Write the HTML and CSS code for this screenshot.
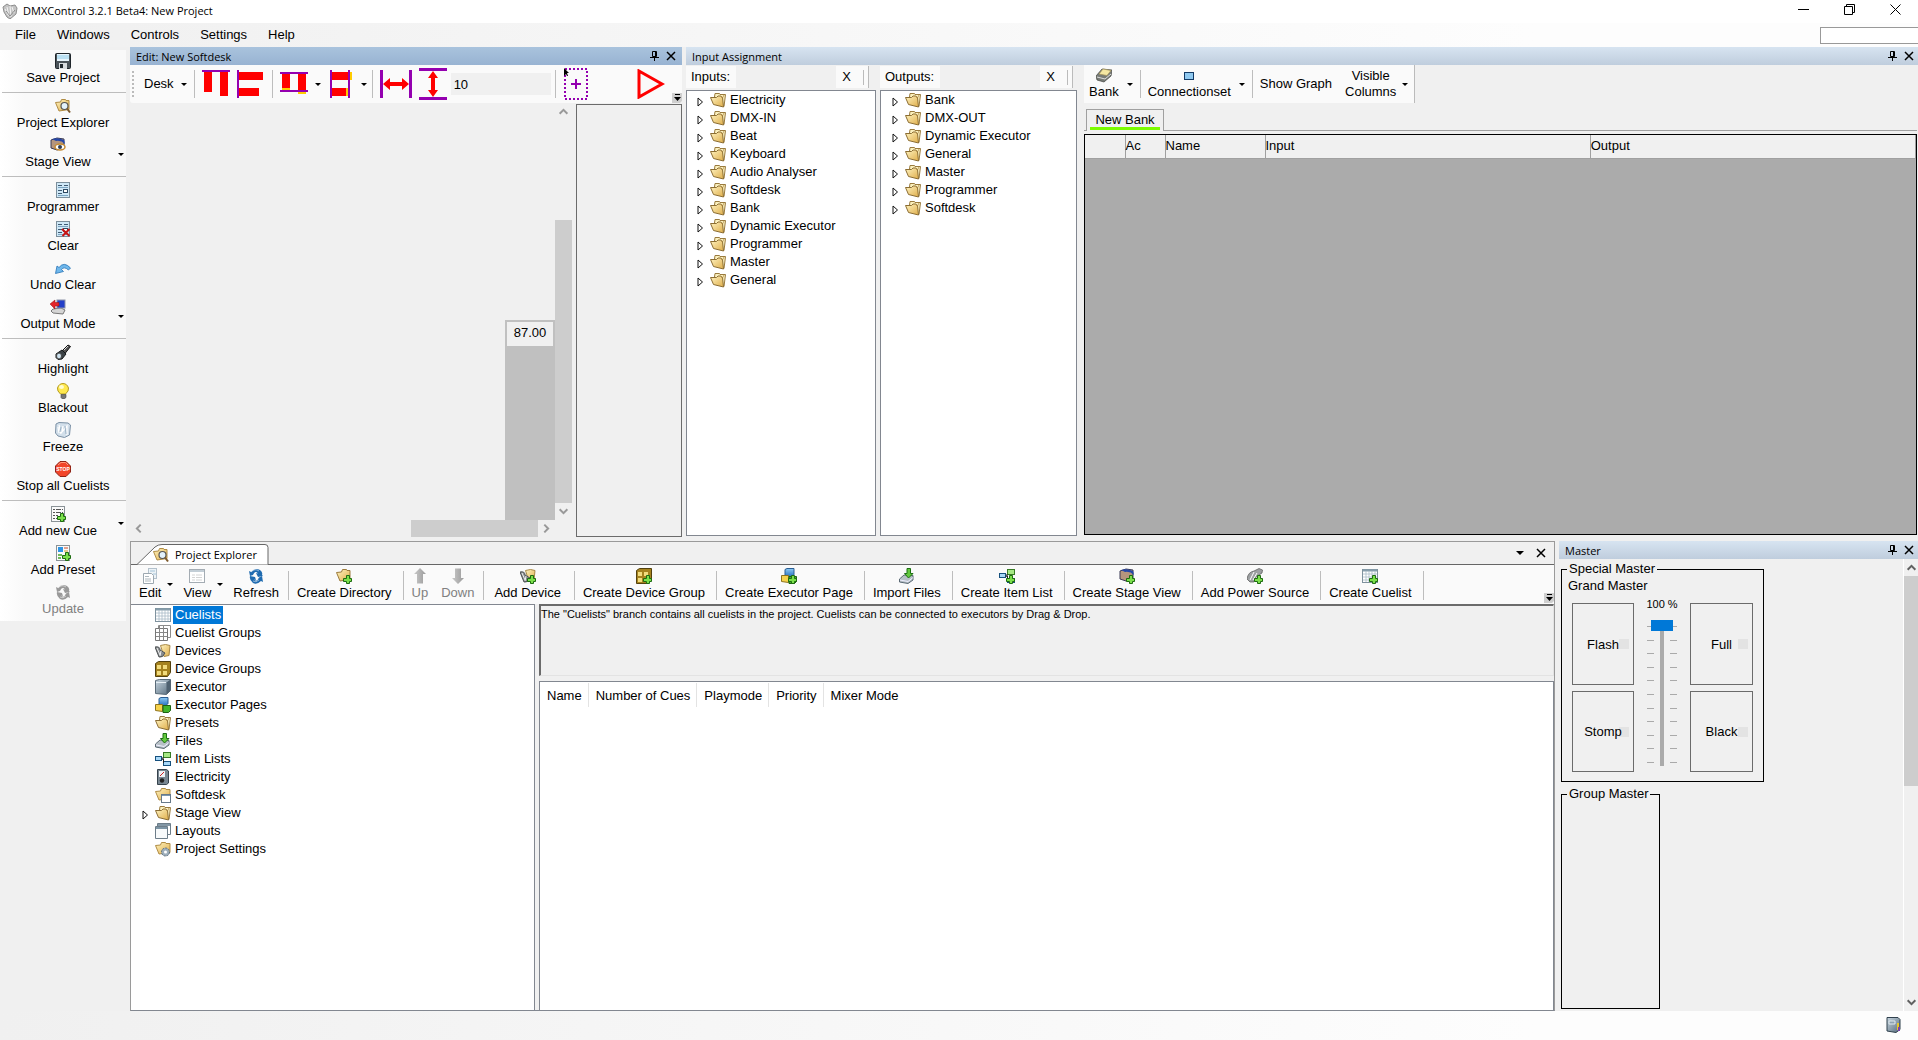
FILE: index.html
```html
<!DOCTYPE html>
<html lang="en">
<head>
<meta charset="utf-8">
<title>DMXControl 3.2.1 Beta4: New Project</title>
<link rel="stylesheet" href="styles.css">
</head>
<body>
<svg class="defs" aria-hidden="true">
  <defs>
    <linearGradient id="gold" x1="0" y1="0" x2="1" y2="1"><stop offset="0" stop-color="#fff3c0"/><stop offset="1" stop-color="#dfae4b"/></linearGradient>
    <linearGradient id="steel" x1="0" y1="0" x2="1" y2="1"><stop offset="0" stop-color="#c8d6e0"/><stop offset="1" stop-color="#556b7c"/></linearGradient>
    <linearGradient id="blue" x1="0" y1="0" x2="0" y2="1"><stop offset="0" stop-color="#8ecbf5"/><stop offset="1" stop-color="#2a72c0"/></linearGradient>
    <linearGradient id="arrow" x1="0" y1="0" x2="1" y2="0"><stop offset="0" stop-color="#c9c9c9"/><stop offset="1" stop-color="#9a9a9a"/></linearGradient>
  </defs>
  <symbol id="plus" viewBox="0 0 16 16"><path d="M10.500 7.500h3v3h2v3h-2v2h-3v-2h-3v-3h3z" fill="#7be04a" stroke="#1d6b10"/></symbol>
  <symbol id="app" viewBox="0 0 16 16"><path d="M1 4l4-3 3 2 5-1 2 3-1 6-6 5-3-2-3-5z" fill="#c4c4c4" stroke="#8d8d8d"/><path d="M5 4l2 9M8 3l1 11M3 6l3 6M10 4l2 6" stroke="#f4f4f4"/><path d="M4 8l4 5 5-6" stroke="#8a8a8a" fill="none"/></symbol>
  <symbol id="save" viewBox="0 0 16 16"><rect x=".5" y=".5" width="15" height="15" rx="1" fill="#4a5359" stroke="#1f262b"/><rect x="2" y="1" width="12" height="7" fill="#e8f5fc"/><path d="M2 3h12M2 5h12" stroke="#8ccbe8"/><rect x="4" y="10" width="8" height="6" fill="#d8dde0"/><rect x="5" y="11" width="3" height="4" fill="#20282e"/></symbol>
  <symbol id="folder" viewBox="0 0 16 16"><path d="M4.500 5l.5-3.500h4.500l.5 1h5.500l-1.500 12" fill="#fbf0bd" stroke="#9a7b3e"/><path d="M.5 5.500h6l1.500-1.500h2.500l2 1.500 1 9.500-10-2.500z" fill="url(#gold)" stroke="#8b6d33"/><path d="M10.500 4.500l2 1.500 1.500-3" stroke="#a7833f" fill="none" stroke-width=".7"/></symbol>
  <symbol id="fsearch" viewBox="0 0 16 16"><path d="M.5 4.500l5-.5 1-2.500h4l.5 1h3v9l-10 1.500z" fill="url(#gold)" stroke="#b08c44"/><circle cx="9.500" cy="8" r="3.500" fill="#e3f2fb" stroke="#555" stroke-width="1.200"/><path d="M12 10.500l3 4" stroke="#7d5a2c" stroke-width="2"/></symbol>
  <symbol id="stage" viewBox="0 0 16 16"><path d="M1 3l6-2 7 1v9l-7 2-6-2z" fill="#b4957d" stroke="#3b3b55"/><path d="M2 2q6-2 12 1l1 4q-4-4-9-3z" fill="#2447a8"/><ellipse cx="10" cy="10" rx="5" ry="3" fill="#fff" stroke="#c58c35" stroke-width="1.500"/><circle cx="10" cy="10" r="2" fill="#2c3c52"/></symbol>
  <symbol id="stageadd" viewBox="0 0 16 16"><path d="M1 3l6-2 7 1v9l-7 2-6-2z" fill="#b4957d" stroke="#3b3b55"/><path d="M2 2q6-2 12 1l1 4q-4-4-9-3z" fill="#2447a8"/><use href="#plus" width="16" height="16"/></symbol>
  <symbol id="prog" viewBox="0 0 16 16"><rect x="1.500" y=".5" width="13" height="15" fill="#cfe8f7" stroke="#7c8f9c"/><path d="M3 3.500h4M9 3.500h4M3 8.500h4M3 11.500h4" stroke="#3f5b73"/><path d="M3 5.500h10M3 13.500h10" stroke="#7ca6c4"/><rect x="8.500" y="7.500" width="4" height="3" fill="#fff" stroke="#2f4a63"/></symbol>
  <symbol id="clear" viewBox="0 0 16 16"><use href="#prog" width="16" height="16"/><path d="M7 8l7.500 7M14.500 8l-7 7" stroke="#c81414" stroke-width="2"/></symbol>
  <symbol id="undo" viewBox="0 0 16 16"><path d="M.5 13.500L2 6l2 1.500Q9 1 15.500 8l-2 2Q9 6 6.500 9.500l2 2z" fill="#6fb8ec" stroke="#2a74b5" stroke-width=".8"/></symbol>
  <symbol id="output" viewBox="0 0 16 16"><path d="M3 10l8-1 4 2-2 4-10-1-2-2z" fill="#d5d5d5" stroke="#777"/><rect x="7" y="1" width="8" height="8" fill="#243fc8" stroke="#8d94a7"/><path d="M0 5l5-4v2.500h4v3.500H5v3z" fill="#e3242b" stroke="#901010" stroke-width=".5"/></symbol>
  <symbol id="torch" viewBox="0 0 16 16"><path d="M7 7l6-6 2.500 1.500L10 9.500z" fill="#555" stroke="#111"/><path d="M1 10l6-4 4 4-4 5-4 .5-2-2z" fill="#3a4145" stroke="#15191b"/><ellipse cx="4" cy="12" rx="2.500" ry="3" fill="#cfe3f0" stroke="#444"/><path d="M9 6l4-4" stroke="#ddd"/></symbol>
  <symbol id="bulb" viewBox="0 0 16 16"><path d="M5.500 11Q2 8 2.500 5 4 .5 8 .5t5.500 4.500q.5 3-3 6z" fill="#ffe94f" stroke="#b59c20"/><ellipse cx="6.500" cy="4" rx="2.500" ry="2" fill="#fffcd0"/><path d="M6 11.500h5v3l-2 1.500H7.500L6 14.500z" fill="#777" stroke="#444" stroke-width=".6"/></symbol>
  <symbol id="ice" viewBox="0 0 16 16"><path d="M1 2l3-1.500 9 .5 2.500 2-1 10-5 2.500L3 14 .5 11z" fill="#d2dfea" stroke="#7b90a5"/><path d="M4 3l2 9M8 4l-1 6 5-6v9M3 5l1 6" stroke="#fff" fill="none" stroke-width="1.200"/><path d="M10 4l1 8M6 5l-1 5" stroke="#9db3c6"/></symbol>
  <symbol id="cueadd" viewBox="0 0 16 16"><rect x="1.500" y=".5" width="13" height="15" fill="#fafafa" stroke="#8a9296"/><path d="M3 3.500h10M3 6.500h10M3 9.500h5M3 12.500h4" stroke="#555" stroke-dasharray="2 1 5 1"/><use href="#plus" width="16" height="16"/></symbol>
  <symbol id="preadd" viewBox="0 0 16 16"><rect x="1.500" y=".5" width="13" height="15" fill="#fafafa" stroke="#8a9296"/><path d="M3 2h5v5H3z" fill="#2f95e4"/><path d="M9 3h4" stroke="#cc4b26"/><path d="M9 6h4" stroke="#d39b26"/><path d="M3 10h4M3 13h3" stroke="#43a428" stroke-width="1.500"/><use href="#plus" width="16" height="16"/></symbol>
  <symbol id="cycle" viewBox="0 0 16 16"><path d="M2 8L1 3l2 1q4-5 9-2 3 2 2 5l1 1-5 1-2-4 2 .5Q7 2 5 7z" fill="currentColor"/><path d="M14 8l1 6-2-1q-4 4-8 2-4-3-3-7l5 1 1 3-2-.5q3 3 5-2z" fill="currentColor"/><path d="M3 4q4-4 8-1M5 13q3 2 6-1" stroke="#fff" stroke-opacity=".5" fill="none"/></symbol>
  <symbol id="bank" viewBox="0 0 16 16"><path d="M0 8l6-7 10 1-1 6-7 6-7-2z" fill="#777b76" stroke="#42443f" stroke-width=".7"/><path d="M3 6l4-5 8 1.500-4 5z" fill="#f4e7a2" stroke="#a3935b" stroke-width=".7"/><path d="M1 9l8 2 6-5" stroke="#ddd" fill="none"/></symbol>
  <symbol id="screen" viewBox="0 0 16 16"><rect x="3.500" y="4.500" width="9" height="7" fill="#8fc9f0" stroke="#123a66"/></symbol>
  <symbol id="edit" viewBox="0 0 16 16"><rect x="6.500" y=".5" width="8" height="10" fill="#edf3f7" stroke="#b3c1cc"/><path d="M1.500 5.500h8l2 2v8h-10z" fill="#fff" stroke="#9da8b0"/><path d="M3 8.500h4M3 11h6M3 13h6" stroke="#aeb8be"/><path d="M8 3h5M11 6h3" stroke="#a5c4d8"/></symbol>
  <symbol id="view" viewBox="0 0 16 16"><rect x=".5" y="1.500" width="15" height="13" fill="#fff" stroke="#a4acb3"/><path d="M1 3h14" stroke="#c3ced6" stroke-width="2"/><path d="M3 7h3M3 9.500h3M3 12h3M7 7h6M7 9.500h6M7 12h6" stroke="#d4d4d4"/></symbol>
  <symbol id="folderadd" viewBox="0 0 16 16"><path d="M.5 4.500l5-.5 1-2.500h4l.5 1h3v9l-10 1.500z" fill="url(#gold)" stroke="#9b7a3c"/><use href="#plus" width="16" height="16"/></symbol>
  <symbol id="up" viewBox="0 0 16 16"><path d="M8 0l6 6h-3v9.500H5V6H2z" fill="url(#arrow)"/></symbol>
  <symbol id="down" viewBox="0 0 16 16"><path d="M8 16l6-6h-3V.5H5V10H2z" fill="url(#arrow)"/></symbol>
  <symbol id="devices" viewBox="0 0 16 16"><path d="M5.500 2.500l5-1 4.500 1-1 10-5 1z" fill="url(#gold)" stroke="#a88948"/><path d="M0 4q5-1 5 3l5 3q-2 5-6 4z" fill="#888c8e" stroke="#4d5153"/><path d="M2 5l3 7M6 8l-1 5" stroke="#eee"/></symbol>
  <symbol id="devadd" viewBox="0 0 16 16"><use href="#devices" width="16" height="16"/><use href="#plus" width="16" height="16"/></symbol>
  <symbol id="groups" viewBox="0 0 16 16"><path d="M.5 2.500l3-2h12v11l-3 4h-12z" fill="#a5821e" stroke="#53410d"/><path d="M2 4h4v4H2zM8 4h4v4H8zM2 10h4v4H2zM8 10h4v4H8z" fill="#f2dc7d"/></symbol>
  <symbol id="groupadd" viewBox="0 0 16 16"><use href="#groups" width="16" height="16"/><use href="#plus" width="16" height="16"/></symbol>
  <symbol id="exec" viewBox="0 0 16 16"><path d="M.5 1.500l4-1h11v11l-4 4-11-1z" fill="url(#steel)" stroke="#5a6b78"/><path d="M11.500 15V3.500l4-3v11z" fill="#4e6170"/><path d="M1 3.500h10" stroke="#e5eef4"/></symbol>
  <symbol id="pages" viewBox="0 0 16 16"><path d="M4 1.500l2-1h7v6l-2 2H4z" fill="url(#blue)" stroke="#2a5e93"/><path d="M.5 7.500h7v7l-7-1z" fill="#f6d24c" stroke="#8e731d"/><path d="M8 8.500h7.500v5l-2 2H8z" fill="#42b52c" stroke="#1e6113"/></symbol>
  <symbol id="pageadd" viewBox="0 0 16 16"><use href="#pages" width="16" height="16"/><use href="#plus" width="16" height="16"/></symbol>
  <symbol id="import" viewBox="0 0 16 16"><path d="M.5 11L5 7l9 .5v4.500L9 15.500.5 14z" fill="#b7c0c6" stroke="#5a6974"/><path d="M1 12l8 1.500 5-4" stroke="#eef" fill="none"/><path d="M8 .5h3.500v5H14L9.500 10 5.500 5.500H8z" fill="#63c93d" stroke="#1d7012"/></symbol>
  <symbol id="items" viewBox="0 0 16 16"><rect x=".5" y="5.500" width="6" height="4" fill="#a8d8f8" stroke="#17517e"/><rect x="8.500" y="1.500" width="7" height="5" fill="#a6e884" stroke="#377b24"/><rect x="8.500" y="10.500" width="7" height="4" fill="#a8d8f8" stroke="#17517e"/><path d="M6.500 8h2v4M8 6v3" stroke="#222" fill="none"/></symbol>
  <symbol id="itemadd" viewBox="0 0 16 16"><use href="#items" width="16" height="16"/><use href="#plus" width="16" height="16"/></symbol>
  <symbol id="power" viewBox="0 0 16 16"><path d="M0 11q1-7 7-8l5-2.500L15.500 2 15 5l-6 4-2 5H3z" fill="#9da0a2" stroke="#555" stroke-width=".7"/><path d="M3 12l4-8M6 12l4-7" stroke="#fff"/><use href="#plus" width="16" height="16"/></symbol>
  <symbol id="grid" viewBox="0 0 16 16"><rect x=".5" y="1.500" width="15" height="13" fill="#fff" stroke="#7f929e"/><path d="M1 2.500h14" stroke="#879eac" stroke-width="2"/><path d="M1 6h14M1 9h14M1 12h14M4 3v11M7 3v11M10 3v11M13 3v11" stroke="#a9bac6" stroke-width=".8"/></symbol>
  <symbol id="gridadd" viewBox="0 0 16 16"><use href="#grid" width="16" height="16"/><use href="#plus" width="16" height="16"/></symbol>
  <symbol id="grids" viewBox="0 0 16 16"><path d="M3.500.5h12v12h-12z" fill="#fff" stroke="#8c8c8c"/><path d="M.5 3.500h12v12H.5z" fill="#fff" stroke="#777"/><path d="M1 7.500h11M1 11.500h11M4.500 1v14M8.500 1v14" stroke="#888"/></symbol>
  <symbol id="meter" viewBox="0 0 16 16"><path d="M2.500.5h9l2 1.500v12l-2 1.500h-9z" fill="#788691" stroke="#36434d"/><rect x="4" y="2" width="6" height="6" fill="#eef3f6"/><path d="M5 7l4-4" stroke="#c22"/><circle cx="7" cy="11.500" r="2.200" fill="#222"/></symbol>
  <symbol id="fwin" viewBox="0 0 16 16"><path d="M.5 4.500l5-.5 1-2.500h4l.5 1h4v9l-11 1.500z" fill="url(#gold)" stroke="#b08c44"/><rect x="6.500" y="7.500" width="9" height="8" fill="#fff" stroke="#66798a"/><path d="M7 8.500h8" stroke="#7b97ab"/></symbol>
  <symbol id="layouts" viewBox="0 0 16 16"><path d="M2.500.5h13v11h-13z" fill="#fff" stroke="#6d7d89"/><path d="M3 2h12" stroke="#8397a5" stroke-width="2"/><path d="M.5 3.500h12v12H.5z" fill="#f8fafb" stroke="#6d7d89"/><path d="M1 5h11" stroke="#7d95a5" stroke-width="2"/></symbol>
  <symbol id="fgear" viewBox="0 0 16 16"><path d="M.5 4.500l5-.5 1-2.500h4l.5 1h4v9l-11 1.500z" fill="url(#gold)" stroke="#b08c44"/><circle cx="10.500" cy="11" r="4" fill="#9daebb" stroke="#5d6e7b" stroke-dasharray="2 1"/><circle cx="10.500" cy="11" r="1.500" fill="#fff"/></symbol>
  <symbol id="server" viewBox="0 0 16 16"><path d="M1 .5h11l2 2v10l-4 3-9-1.500z" fill="url(#steel)" stroke="#2f404d"/><path d="M3 4h6v3H3z" fill="#8fa4b3" stroke="#dfe8ee"/><path d="M12 6v7" stroke="#e9c42b" stroke-width="2"/><path d="M13 10v4" stroke="#7a3fb0" stroke-width="2"/></symbol>
  <symbol id="pin" viewBox="0 0 9 12"><path d="M2.500 1.500h4v5h-4zM5.500 1.500v5M0 7.500h9M4.500 7v4" fill="none" stroke="#000"/></symbol>
  <symbol id="cross" viewBox="0 0 10 10"><path d="M1 1l8 8M9 1L1 9" stroke="#000" stroke-width="1.500"/></symbol>
  <symbol id="tri" viewBox="0 0 6 10"><path d="M1 1l4.500 4L1 9z" fill="#fff" stroke="#111"/></symbol>
  <symbol id="over" viewBox="0 0 10 38"><path d="M0 28h10v8l-2 2H0z" fill="#cfcfcf"/><path d="M3 29.500h5" stroke="#000"/><path d="M2 32h7L5.500 36z" fill="#000"/></symbol>
  <symbol id="chev" viewBox="0 0 10 10"><path d="M1.500 7L5 3.500 8.500 7" fill="none" stroke="currentColor" stroke-width="1.800"/></symbol>
</svg>

<header class="titlebar">
  <svg class="i16"><use href="#app"/></svg>
  <h1>DMXControl 3.2.1 Beta4: New Project</h1>
  <div class="winbtns">
    <button aria-label="Minimize"><svg width="11" height="11"><path d="M0 5.500h11" stroke="#000"/></svg></button>
    <button aria-label="Restore"><svg width="11" height="11"><path d="M.5 2.500h8v8h-8zM2.500 2V.5h8v8H9" fill="none" stroke="#000"/></svg></button>
    <button aria-label="Close"><svg width="11" height="11"><path d="M.5.5l10 10M10.500.5l-10 10" stroke="#000"/></svg></button>
  </div>
</header>
<nav class="menubar">
  <button>File</button><button>Windows</button><button>Controls</button><button>Settings</button><button>Help</button>
  <input type="text" aria-label="Search">
</nav>

<div class="workspace">
  <aside class="sidebar">
    <button class="tool"><svg class="i16"><use href="#save"/></svg>Save Project</button>
    <hr>
    <button class="tool"><svg class="i16"><use href="#fsearch"/></svg>Project Explorer</button>
    <button class="tool drop"><svg class="i16"><use href="#stage"/></svg>Stage View</button>
    <hr>
    <button class="tool"><svg class="i16"><use href="#prog"/></svg>Programmer</button>
    <button class="tool"><svg class="i16"><use href="#clear"/></svg>Clear</button>
    <button class="tool"><svg class="i16"><use href="#undo"/></svg>Undo Clear</button>
    <button class="tool drop"><svg class="i16"><use href="#output"/></svg>Output Mode</button>
    <hr>
    <button class="tool"><svg class="i16"><use href="#torch"/></svg>Highlight</button>
    <button class="tool"><svg class="i16"><use href="#bulb"/></svg>Blackout</button>
    <button class="tool"><svg class="i16"><use href="#ice"/></svg>Freeze</button>
    <button class="tool"><svg class="i16" viewBox="0 0 16 16"><path d="M5 .5h6L15.500 5v6L11 15.500H5L.5 11V5z" fill="#f2452a" stroke="#8e2417"/><path d="M3 4l3-2.500h4.500L13 4" stroke="#ff9c80" fill="none"/><text x="8" y="10" text-anchor="middle" font-family="Liberation Sans" font-weight="bold" font-size="5" fill="#fff">STOP</text></svg>Stop all Cuelists</button>
    <hr>
    <button class="tool drop"><svg class="i16"><use href="#cueadd"/></svg>Add new Cue</button>
    <button class="tool"><svg class="i16"><use href="#preadd"/></svg>Add Preset</button>
    <button class="tool off"><svg class="i16"><use href="#cycle"/></svg>Update</button>
  </aside>

  <main class="docks">
    <div class="row">
      <section class="dock softdesk">
        <header class="docktitle active"><h2>Edit: New Softdesk</h2><button aria-label="Pin"><svg width="9" height="12"><use href="#pin"/></svg></button><button aria-label="Close"><svg width="10" height="10"><use href="#cross"/></svg></button></header>
        <div class="deskbar">
          <span class="grip"></span>
          <button class="deskmenu">Desk<i class="caret"></i></button>
          <i class="sep"></i>
          <button aria-label="Align top"><svg width="28" height="28"><path d="M2 2h8v20H2zM18 2h8v24h-8z" fill="#f00"/><path d="M0 1h28" stroke="#9400b0" stroke-width="2"/></svg></button>
          <button aria-label="Align left"><svg width="28" height="28"><path d="M2 2h24v8H2zM2 18h20v8H2z" fill="#f00"/><path d="M1 0v28" stroke="#9400b0" stroke-width="2"/></svg></button>
          <i class="sep"></i>
          <button class="caretbtn" aria-label="Same height"><svg width="28" height="28"><path d="M2 16h8v4H2zM18 20h8v4h-8z" fill="#fc0"/><path d="M2 2h8v16H2zM18 2h8v18h-8z" fill="#f00"/><path d="M0 3h28M0 21h28" stroke="#9400b0" stroke-width="2"/></svg><i class="caret"></i></button>
          <button class="caretbtn" aria-label="Same width"><svg width="28" height="28"><path d="M18 2h4v8h-4zM14 18h4v8h-4z" fill="#fc0"/><path d="M2 2h17v8H2zM2 18h14v8H2z" fill="#f00"/><path d="M1 0v28M19 0v28" stroke="#9400b0" stroke-width="2"/></svg><i class="caret"></i></button>
          <i class="sep"></i>
          <button aria-label="Horizontal spacing"><svg width="32" height="28"><path d="M1.500 0v28M30.500 0v28" stroke="#9400b0" stroke-width="3"/><path d="M3 14l7-6v4h12V8l7 6-7 6v-4H10v4z" fill="#f00"/></svg></button>
          <button aria-label="Vertical spacing"><svg width="28" height="32"><path d="M0 1.500h28M0 30.500h28" stroke="#9400b0" stroke-width="3"/><path d="M14 3l5 7h-3v12h3l-5 7-5-7h3V10H9z" fill="#f00"/></svg></button>
          <input type="text" value="10" aria-label="Spacing">
          <i class="sep"></i>
          <button aria-label="Add control"><svg width="26" height="32"><rect x="2" y="1" width="22" height="30" fill="none" stroke="#9400b0" stroke-width="2" stroke-dasharray="2 2"/><path d="M8 16h10M13 11v10" stroke="#9400b0" stroke-width="2"/><path d="M1 0l5 5H4l1 3H4L3 6 1 8z" fill="#000"/></svg></button>
          <button class="play" aria-label="Run"><svg width="28" height="30"><path d="M2 2l23 13L2 28z" fill="none" stroke="#f00" stroke-width="3"/></svg></button>
          <svg width="10" height="38"><use href="#over"/></svg>
        </div>
        <div class="deskbody">
          <div class="canvas">
            <div class="fader"><span>87.00</span></div>
            <div class="vbar"><svg><use href="#chev"/></svg><i></i><svg class="flip"><use href="#chev"/></svg></div>
            <div class="hbar"><svg class="lt"><use href="#chev"/></svg><i></i><svg class="rt"><use href="#chev"/></svg></div>
          </div>
          <div class="props"></div>
        </div>
      </section>

      <section class="dock assign">
        <header class="docktitle"><h2>Input Assignment</h2><button aria-label="Pin"><svg width="9" height="12"><use href="#pin"/></svg></button><button aria-label="Close"><svg width="10" height="10"><use href="#cross"/></svg></button></header>
        <div class="assignbody">
          <div class="pane inputs">
            <div class="filter"><label for="fin">Inputs:</label><input id="fin" type="text"><button>X</button><i></i></div>
            <ul class="tree">
              <li><svg class="tri"><use href="#tri"/></svg><svg class="i16"><use href="#folder"/></svg>Electricity</li>
              <li><svg class="tri"><use href="#tri"/></svg><svg class="i16"><use href="#folder"/></svg>DMX-IN</li>
              <li><svg class="tri"><use href="#tri"/></svg><svg class="i16"><use href="#folder"/></svg>Beat</li>
              <li><svg class="tri"><use href="#tri"/></svg><svg class="i16"><use href="#folder"/></svg>Keyboard</li>
              <li><svg class="tri"><use href="#tri"/></svg><svg class="i16"><use href="#folder"/></svg>Audio Analyser</li>
              <li><svg class="tri"><use href="#tri"/></svg><svg class="i16"><use href="#folder"/></svg>Softdesk</li>
              <li><svg class="tri"><use href="#tri"/></svg><svg class="i16"><use href="#folder"/></svg>Bank</li>
              <li><svg class="tri"><use href="#tri"/></svg><svg class="i16"><use href="#folder"/></svg>Dynamic Executor</li>
              <li><svg class="tri"><use href="#tri"/></svg><svg class="i16"><use href="#folder"/></svg>Programmer</li>
              <li><svg class="tri"><use href="#tri"/></svg><svg class="i16"><use href="#folder"/></svg>Master</li>
              <li><svg class="tri"><use href="#tri"/></svg><svg class="i16"><use href="#folder"/></svg>General</li>
            </ul>
          </div>
          <div class="pane outputs">
            <div class="filter"><label for="fout">Outputs:</label><input id="fout" type="text"><button>X</button><i></i></div>
            <ul class="tree">
              <li><svg class="tri"><use href="#tri"/></svg><svg class="i16"><use href="#folder"/></svg>Bank</li>
              <li><svg class="tri"><use href="#tri"/></svg><svg class="i16"><use href="#folder"/></svg>DMX-OUT</li>
              <li><svg class="tri"><use href="#tri"/></svg><svg class="i16"><use href="#folder"/></svg>Dynamic Executor</li>
              <li><svg class="tri"><use href="#tri"/></svg><svg class="i16"><use href="#folder"/></svg>General</li>
              <li><svg class="tri"><use href="#tri"/></svg><svg class="i16"><use href="#folder"/></svg>Master</li>
              <li><svg class="tri"><use href="#tri"/></svg><svg class="i16"><use href="#folder"/></svg>Programmer</li>
              <li><svg class="tri"><use href="#tri"/></svg><svg class="i16"><use href="#folder"/></svg>Softdesk</li>
            </ul>
          </div>
          <div class="bankpane">
            <div class="bankbar">
              <button><span><svg class="i16"><use href="#bank"/></svg>Bank</span><i class="caret"></i></button>
              <i class="sep"></i>
              <button><span><svg class="i16"><use href="#screen"/></svg>Connectionset</span><i class="caret"></i></button>
              <i class="sep"></i>
              <button>Show Graph</button>
              <button class="cols"><span>Visible<br>Columns</span><i class="caret"></i></button>
            </div>
            <div class="banktabs"><button>New Bank</button></div>
            <div class="bankgrid">
              <table><thead><tr><th class="c0"></th><th class="c1">Ac</th><th class="c2">Name</th><th>Input</th><th>Output</th></tr></thead></table>
            </div>
          </div>
        </div>
      </section>
    </div>

    <div class="row">
      <section class="dock explorer">
        <div class="exptabs">
          <button class="exptab"><svg class="shape" width="132" height="21"><path d="M0 20.500L18 3Q21 .5 25 .5h103q3 0 3 3v17" fill="#fff" stroke="#666"/></svg><svg class="i16"><use href="#fsearch"/></svg><span>Project Explorer</span></button>
          <button class="tabctl" aria-label="Window list"><i class="caret big"></i></button>
          <button class="tabctl" aria-label="Close"><svg width="10" height="10"><use href="#cross"/></svg></button>
        </div>
        <div class="expbar">
          <button class="tool drop"><svg class="i16"><use href="#edit"/></svg>Edit</button>
          <button class="tool drop"><svg class="i16"><use href="#view"/></svg>View</button>
          <button class="tool refresh"><svg class="i16 blue"><use href="#cycle"/></svg>Refresh</button>
          <i class="sep"></i>
          <button class="tool"><svg class="i16"><use href="#folderadd"/></svg>Create Directory</button>
          <i class="sep"></i>
          <button class="tool off"><svg class="i16"><use href="#up"/></svg>Up</button>
          <button class="tool off down"><svg class="i16"><use href="#down"/></svg>Down</button>
          <i class="sep"></i>
          <button class="tool add"><svg class="i16"><use href="#devadd"/></svg>Add Device</button>
          <i class="sep"></i>
          <button class="tool"><svg class="i16"><use href="#groupadd"/></svg>Create Device Group</button>
          <i class="sep"></i>
          <button class="tool"><svg class="i16"><use href="#pageadd"/></svg>Create Executor Page</button>
          <i class="sep"></i>
          <button class="tool"><svg class="i16"><use href="#import"/></svg>Import Files</button>
          <i class="sep"></i>
          <button class="tool"><svg class="i16"><use href="#itemadd"/></svg>Create Item List</button>
          <i class="sep"></i>
          <button class="tool"><svg class="i16"><use href="#stageadd"/></svg>Create Stage View</button>
          <i class="sep"></i>
          <button class="tool"><svg class="i16"><use href="#power"/></svg>Add Power Source</button>
          <i class="sep"></i>
          <button class="tool"><svg class="i16"><use href="#gridadd"/></svg>Create Cuelist</button>
          <i class="sep"></i>
          <svg class="over" width="10" height="38"><use href="#over"/></svg>
        </div>
        <div class="expbody">
          <ul class="tree">
            <li><i class="tri"></i><svg class="i16"><use href="#grid"/></svg><b>Cuelists</b></li>
            <li><i class="tri"></i><svg class="i16"><use href="#grids"/></svg>Cuelist Groups</li>
            <li><i class="tri"></i><svg class="i16"><use href="#devices"/></svg>Devices</li>
            <li><i class="tri"></i><svg class="i16"><use href="#groups"/></svg>Device Groups</li>
            <li><i class="tri"></i><svg class="i16"><use href="#exec"/></svg>Executor</li>
            <li><i class="tri"></i><svg class="i16"><use href="#pages"/></svg>Executor Pages</li>
            <li><i class="tri"></i><svg class="i16"><use href="#folder"/></svg>Presets</li>
            <li><i class="tri"></i><svg class="i16"><use href="#import"/></svg>Files</li>
            <li><i class="tri"></i><svg class="i16"><use href="#items"/></svg>Item Lists</li>
            <li><i class="tri"></i><svg class="i16"><use href="#meter"/></svg>Electricity</li>
            <li><i class="tri"></i><svg class="i16"><use href="#fwin"/></svg>Softdesk</li>
            <li><svg class="tri"><use href="#tri"/></svg><svg class="i16"><use href="#folder"/></svg>Stage View</li>
            <li><i class="tri"></i><svg class="i16"><use href="#layouts"/></svg>Layouts</li>
            <li><i class="tri"></i><svg class="i16"><use href="#fgear"/></svg>Project Settings</li>
          </ul>
          <div class="detail">
            <p class="desc">The "Cuelists" branch contains all cuelists in the project. Cuelists can be connected to executors by Drag &amp; Drop.</p>
            <div class="list"><table><thead><tr><th>Name</th><th>Number of Cues</th><th>Playmode</th><th>Priority</th><th class="last">Mixer Mode</th></tr></thead></table></div>
          </div>
        </div>
      </section>

      <section class="dock master">
        <header class="docktitle"><h2>Master</h2><button aria-label="Pin"><svg width="9" height="12"><use href="#pin"/></svg></button><button aria-label="Close"><svg width="10" height="10"><use href="#cross"/></svg></button></header>
        <div class="masterbody">
          <div class="groups">
            <fieldset class="special"><legend>Special Master</legend>
              <label for="gm">Grand Master</label>
              <div class="gm">
                <div class="pads"><button>Flash</button><button>Stomp</button></div>
                <div class="slide">
                  <output for="gm">100 %</output>
                  <div class="track">
                    <svg width="30" height="138"><path d="M0 .5h7M0 14.500h7M0 27.500h7M0 41.500h7M0 54.500h7M0 68.500h7M0 82.500h7M0 95.500h7M0 109.500h7M0 122.500h7M0 136.500h7M23 .5h7M23 14.500h7M23 27.500h7M23 41.500h7M23 54.500h7M23 68.500h7M23 82.500h7M23 95.500h7M23 109.500h7M23 122.500h7M23 136.500h7" stroke="#aaa"/></svg>
                    <input id="gm" type="range" min="0" max="100" value="100">
                  </div>
                </div>
                <div class="pads"><button>Full</button><button>Black</button></div>
              </div>
            </fieldset>
            <fieldset class="group"><legend>Group Master</legend></fieldset>
          </div>
          <div class="mscroll"><svg><use href="#chev"/></svg><i></i><svg class="flip"><use href="#chev"/></svg></div>
        </div>
      </section>
    </div>
  </main>
</div>
<footer class="statusbar"><svg class="i16"><use href="#server"/></svg></footer>
</body>
</html>
```
FILE: styles.css
```css
* { box-sizing: border-box; }
body {
  margin: 0; height: 100vh; display: flex; flex-direction: column; overflow: hidden;
  background: #f0f0f0; color: #000;
  font: 13px/18px "Liberation Sans", Arial, sans-serif;
}
button { border: 0; padding: 0; margin: 0; background: none; font: inherit; color: inherit; }
input { font: inherit; min-width: 0; border: 0; padding: 0 3px; }
h1, h2, p, ul { margin: 0; padding: 0; font: inherit; }
ul { list-style: none; }
svg { display: block; flex: none; }
.defs { position: absolute; width: 0; height: 0; }
.i16 { width: 16px; height: 16px; }
.blue { color: #1f6bb0; }
.caret { width: 0; height: 0; border: 3px solid transparent; border-top-color: #000; border-bottom: 0; flex: none; }
.caret.big { border-width: 4px 4px 0; }
.sep { width: 1px; background: #bdbdbd; flex: none; align-self: stretch; margin: 5px 0; }

.titlebar { display: flex; align-items: center; height: 23px; flex: none; background: #fff; padding: 0 17px 4px 2px; gap: 5px; }
.titlebar .i16 { margin-top: 2px; }
.titlebar h1 { font: 11px/18px "Open Sans", "Noto Sans", sans-serif; flex: 1; padding-top: 3px; }
.winbtns { display: flex; gap: 35px; }
.menubar { display: flex; align-items: center; height: 24px; flex: none; padding-left: 15px; gap: 21px; background: linear-gradient(90deg, #f0f0f0, #fdfdfd 80%); }
.menubar input { margin-left: auto; width: 98px; height: 17px; background: #fff; border: 1px solid #999; border-right: 0; }

.workspace { flex: 1; min-height: 0; display: flex; }
.sidebar { width: 126px; margin-right: 4px; margin-top: 3px; flex: none; align-self: flex-start; background: linear-gradient(90deg, #fff, #f9f9f9 20%); padding-top: 1px; display: flex; flex-direction: column; }
.sidebar hr { margin: 2px 0 3px 2px; border: 0; height: 1px; background: #bdbdbd; width: 124px; }
.tool { display: flex; flex-direction: column; align-items: center; position: relative; }
.sidebar .tool { height: 39px; padding-top: 2px; line-height: 17px; }
.drop::after { content: ""; position: absolute; top: 18px; right: 2px; border: 3px solid transparent; border-top-color: #000; border-bottom: 0; }
.sidebar .drop { padding-right: 10px; }
.off { color: #808080; }
.off svg { color: #999; }

.docks { flex: 1; min-width: 0; display: grid; grid-template-rows: 491fr 470fr; gap: 3px; }
.row { display: flex; gap: 4px; min-height: 0; min-width: 0; }
.dock { display: flex; flex-direction: column; min-width: 0; min-height: 0; }
.docktitle { display: flex; align-items: center; height: 18px; flex: none; gap: 7px; padding: 0 4px 0 6px; background: linear-gradient(#d7e4f1, #bfcddd); }
.docktitle.active { background: linear-gradient(#a9c3dd, #98b3d2); padding-right: 6px; }
.docktitle h2 { flex: 1; font: 11px/18px "Open Sans", "Noto Sans", sans-serif; padding-top: 1px; }

.softdesk { width: 552px; flex: none; }
.deskbar { display: flex; align-items: center; height: 38px; flex: none; background: #fafafa; gap: 7px; padding-left: 2px; border-radius: 0 0 3px 3px; }
.deskbar button { flex: none; }
.grip { width: 2px; height: 27px; background: repeating-linear-gradient(#bbb 0 2px, transparent 2px 4px); }
.deskmenu { display: flex; align-items: center; gap: 7px; padding-left: 3px; }
.caretbtn { display: flex; align-items: center; gap: 7px; }
.caretbtn + .caretbtn { margin-right: -2px; }
.caretbtn + .caretbtn svg { margin-left: 2px; margin-right: -4px; }
.deskbar input { width: 100px; height: 22px; background: #f0f0f0; margin-right: -3px; margin-left: -3px; }
.play { margin-left: auto; }
.deskbody { flex: 1; min-height: 0; display: flex; gap: 4px; }
.canvas { flex: 1; display: grid; grid-template: 1fr 17px / 1fr 50px 17px; padding-bottom: 1px; }
.fader { grid-area: 1 / 2; align-self: end; height: 48%; background: #c0c0c0; padding: 2px; }
.fader span { display: block; height: 24px; line-height: 22px; background: #f0f0f0; text-align: center; font-size: 13px; }
.vbar, .hbar, .mscroll { display: flex; align-items: center; color: #999; }
.vbar { grid-area: 1 / 3; flex-direction: column; }
.vbar svg, .hbar svg, .mscroll svg { width: 11px; height: 11px; margin: 3px; }
.vbar i { width: 17px; height: 283px; background: #cdcdcd; margin-top: auto; }
.hbar { grid-area: 2 / 1 / 3 / 3; }
.hbar i { width: 127px; height: 17px; background: #cdcdcd; margin-left: auto; }
.flip { transform: rotate(180deg); }
.lt { transform: rotate(-90deg); }
.rt { transform: rotate(90deg); }
.props { width: 106px; border: 1px solid #6b6b6b; margin: 1px 0; }

.assign { flex: 1; }
.assignbody { flex: 1; min-height: 0; display: flex; gap: 4px; padding-bottom: 2px; }
.pane { display: flex; flex-direction: column; gap: 2px; }
.inputs { width: 190px; }
.outputs { width: 197px; }
.filter { display: flex; align-items: center; height: 22px; margin-top: 1px; margin-right: 7px; background: #fafafa; border-right: 1px solid #bbb; padding-left: 5px; }
.outputs .filter { margin-right: 4px; }
.filter label { flex: 1; }
.filter input { width: 100px; height: 22px; background: #f0f0f0; }
.filter button { width: 21px; }
.filter i { width: 1px; height: 15px; background: #bbb; margin: 0 4px 0 6px; }
.tree { background: #fff; border: 1px solid #828790; flex: 1; overflow: hidden; padding-left: 10px; }
.tree li { display: flex; align-items: center; height: 18px; gap: 4px; white-space: nowrap; }
.tree .tri { width: 6px; height: 10px; margin: 3px 3px 0 0; flex: none; }
.outputs .tree { padding-left: 11px; }
.tree b { font-weight: normal; background: #0078d7; color: #fff; padding: 0 2px; margin-left: -2px; }
.bankpane { flex: 1; min-width: 0; display: flex; flex-direction: column; padding: 0 1px 1px 3px; }
.bankbar { display: flex; align-items: center; height: 38px; flex: none; align-self: flex-start; background: #fafafa; border-right: 1px solid #bbb; padding: 0 6px 0 5px; gap: 7px; line-height: 16px; }
.bankbar button { display: flex; align-items: center; gap: 8px; }
.bankbar span { display: flex; flex-direction: column; align-items: center; }
.bankbar .cols { margin-left: 6px; gap: 6px; }
.banktabs { height: 28px; flex: none; border-bottom: 1px solid #a0a0a0; padding: 6px 0 0 2px; display: flex; }
.banktabs button { width: 78px; height: 22px; background: #f0f0f0; border: 1px solid #a0a0a0; border-bottom: 0; padding: 2px 3px 0; text-align: center; line-height: 14px; }
.banktabs button::after { content: ""; display: block; height: 3px; background: #7cfc00; }
.bankgrid { flex: 1; margin-top: 3px; border: 1px solid #000; background: #ababab; }
table { border-collapse: collapse; }
th { font-weight: normal; text-align: left; padding: 0; white-space: nowrap; }
.bankgrid table { width: 100%; background: #f0f0f0; table-layout: fixed; }
.bankgrid th { height: 23px; border-right: 1px solid #a0a0a0; border-bottom: 1px solid #a0a0a0; }
.c0, .c1 { width: 40px; }
.c2 { width: 100px; }

.explorer { flex: 1; border: 1px solid #9a9a9a; border-bottom-color: #828790; }
.exptabs { display: flex; align-items: center; height: 23px; flex: none; border-bottom: 1px solid #666; padding: 0 8px 0 6px; gap: 12px; }
.exptab { position: relative; display: flex; align-items: center; align-self: flex-end; width: 132px; height: 21px; margin: 0 auto -1px 0; padding-left: 16px; gap: 6px; font: 11px/18px "Open Sans", "Noto Sans", sans-serif; }
.exptab .shape { position: absolute; inset: 0; }
.exptab .i16, .exptab span { position: relative; }
.tabctl { display: flex; align-items: center; }
.expbar { display: flex; height: 39px; flex: none; background: #fafafa; }
.expbar .tool { padding: 3px 11px 0 8px; line-height: 17px; white-space: nowrap; }
.expbar .drop { padding-right: 14px; }
.expbar .refresh { padding-right: 9px; }
.expbar .down { padding: 3px 9px 0 2px; }
.expbar .add { padding: 3px 13px 0 10px; }
.expbar .sep { margin: 6px 0 4px; }
.over { margin-left: auto; }
.expbody { flex: 1; min-height: 0; display: flex; gap: 4px; }
.expbody .tree { flex: none; width: 404px; padding: 1px 0 0 11px; border-left: 0; border-bottom: 0; }
.detail { flex: 1; min-width: 0; display: flex; flex-direction: column; gap: 5px; }
.desc { height: 72px; border: 1px solid #e3e3e3; border-top: 2px solid #6b6b6b; border-left: 2px solid #6b6b6b; font-size: 11px; line-height: 16px; white-space: nowrap; }
.list { flex: 1; background: #fff; border: 1px solid #828790; border-bottom: 0; padding-top: 1px; }
.list th { height: 24px; padding: 2px 6px 0 7px; border-right: 1px solid #e3e3e3; }
.list .last { border: 0; }

.master { width: 359px; flex: none; }
.masterbody { flex: 1; min-height: 0; display: flex; }
.groups { flex: 1; padding: 2px; display: flex; flex-direction: column; align-items: flex-start; gap: 4px; }
fieldset { border: 1px solid #000; margin: 0; padding: 0 10px 9px; min-width: 0; }
legend { padding: 0 2px; margin: 0 -8px 0 -5px; line-height: 16px; white-space: nowrap; }
.special { width: 203px; }
.special label { display: block; margin-left: -4px; }
.gm { display: grid; grid-template-columns: 62px 1fr 63px; padding-top: 8px; height: 177px; }
.pads { display: grid; grid-template-rows: 1fr 1fr; gap: 6px; }
.pads button { border: 1px solid #6b6b6b; position: relative; z-index: 0; padding-top: 2px; }
.pads button::after { content: ""; position: absolute; z-index: -1; width: 10px; height: 10px; right: 4px; top: 35px; background: #e3e3e3; }
.slide { display: flex; flex-direction: column; align-items: center; }
.slide output { font-size: 11px; line-height: 12px; margin-top: -5px; }
.track { display: grid; justify-items: center; margin-top: 10px; }
.track svg { grid-area: 1 / 1; margin-top: 6px; }
#gm { grid-area: 1 / 1; appearance: none; writing-mode: vertical-lr; direction: rtl; width: 22px; height: 146px; margin: 0; padding: 0; background: linear-gradient(#aaa, #aaa) center / 4px 100% no-repeat; }
#gm::-webkit-slider-thumb { appearance: none; width: 22px; height: 11px; background: #0078d7; }
.group { width: 99px; height: 223px; }
.mscroll { flex-direction: column; width: 15px; border-left: 1px solid #fff; color: #606060; }
.mscroll i { width: 14px; height: 210px; background: #cdcdcd; }
.mscroll .flip { margin-top: auto; }
.statusbar { display: flex; align-items: center; justify-content: flex-end; height: 29px; flex: none; padding: 0 16px 2px 0; background: linear-gradient(90deg, #f0f0f0, #fdfdfd 80%); }
```
